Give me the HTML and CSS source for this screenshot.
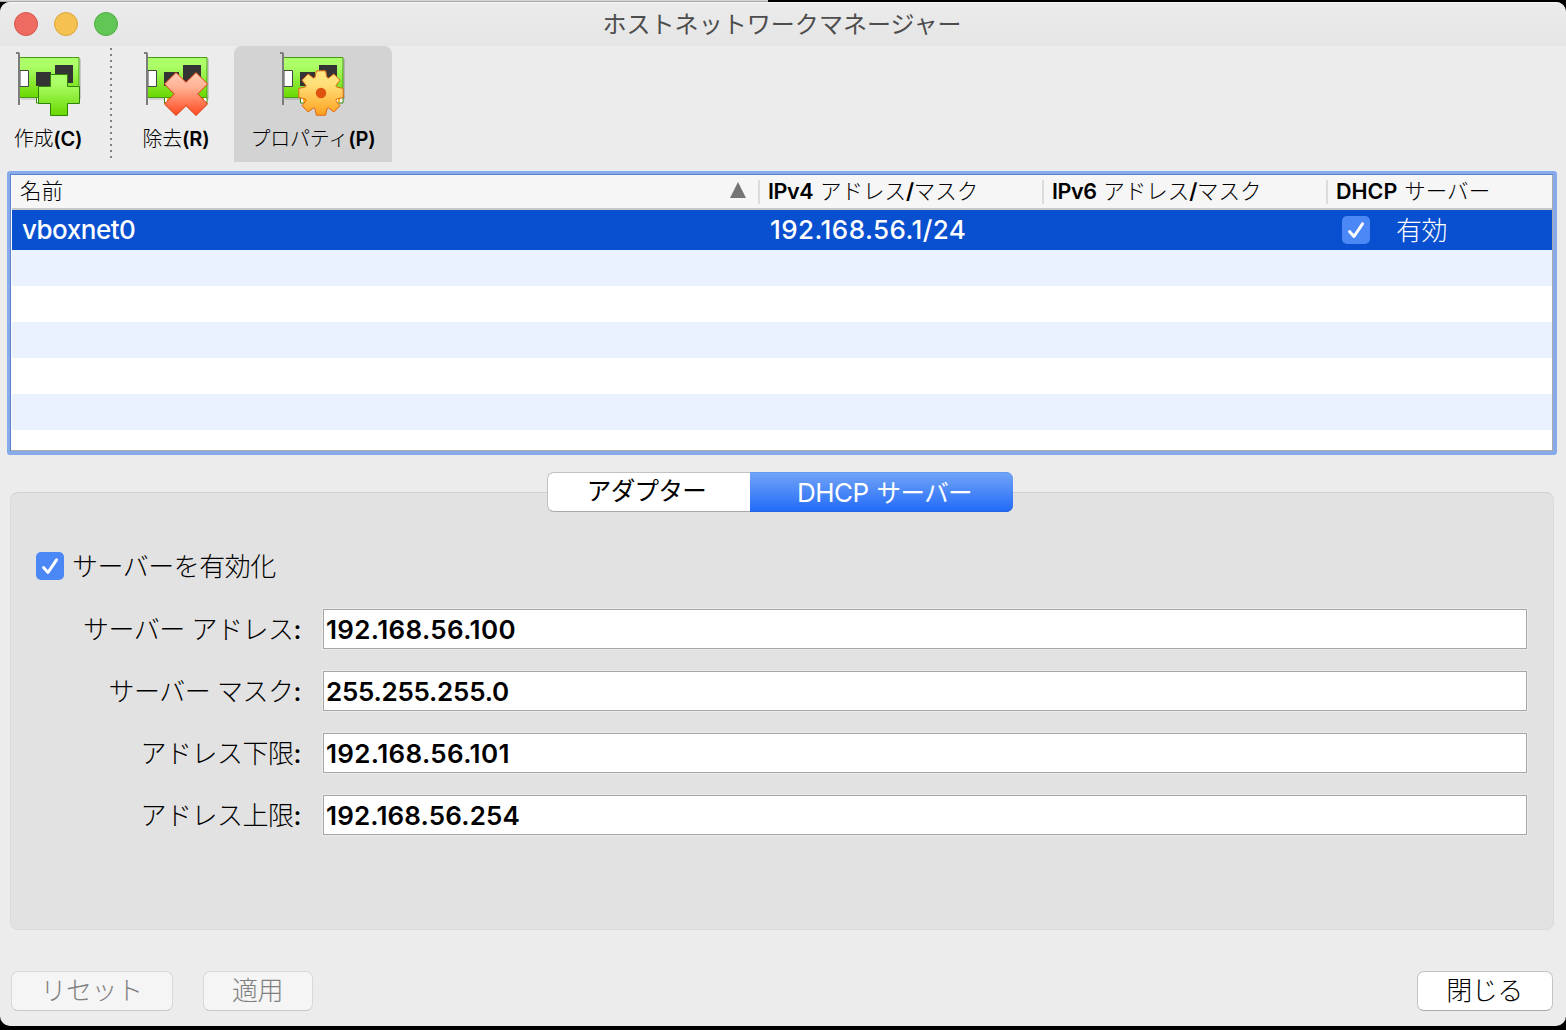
FILE: index.html
```html
<!DOCTYPE html>
<html lang="ja">
<head>
<meta charset="utf-8">
<title>ホストネットワークマネージャー</title>
<link rel="stylesheet" href="styles.css">
</head>
<body>
<svg class="defs" width="0" height="0" aria-hidden="true">
  <defs>
    <linearGradient id="green" x1="0" y1="0" x2="0" y2="1"><stop offset="0.2" stop-color="#adff69"/><stop offset="1" stop-color="#69d700"/></linearGradient>
    <linearGradient id="red" x1="0" y1="0" x2="0" y2="1"><stop offset="0" stop-color="#ffccb3"/><stop offset="0.35" stop-color="#ffb193"/><stop offset="1" stop-color="#ff481e"/></linearGradient>
    <linearGradient id="orange" x1="0" y1="0" x2="0" y2="1"><stop offset="0" stop-color="#ffe680"/><stop offset="0.3" stop-color="#ffe07a"/><stop offset="1" stop-color="#ffa01e"/></linearGradient>
    <symbol id="card" viewBox="0 0 66 66">
      <path d="M6 48H65.200V8" fill="none" stroke="#000" stroke-opacity=".22" stroke-width="1"/>
      <path d="M21.500 46h42.500v6h-42.500z" fill="#fff" stroke="#348a0b"/>
      <path d="M24 47h3v4h-3zM29 47h3v4h-3zM54 47h3v4h-3zM59 47h2v4h-2z" fill="#ffb400"/>
      <path d="M4.500 6.500h59.500v40h-59.500z" fill="url(#green)" stroke="#469b14"/>
      <path d="M5 19.500h8.500v16H5z" fill="#fff" stroke="#444"/>
      <path d="M21 21h15v14H21zM40 14h18v18H40z" fill="#343434"/>
      <path d="M1 2h2.300q.700 0 .700.700V54" fill="none" stroke="#7c7c7c" stroke-width="2"/>
    </symbol>
  </defs>
</svg>
<div class="window">
  <header class="titlebar">
    <div class="lights"><i class="light close"></i><i class="light minimize"></i><i class="light zoom"></i></div>
    <h1 class="title">ホストネットワークマネージャー</h1>
  </header>
  <nav class="toolbar">
    <div class="tool create">
      <svg width="66" height="66" viewBox="0 0 66 66"><use href="#card"/><path d="M35.500 23.500h17v12h12v17h-12v12h-17v-12h-12v-17h12z" fill="url(#green)" stroke="#2f8406"/></svg>
      <span class="caption">作成<b>(C)</b></span>
    </div>
    <div class="separator"></div>
    <div class="tool remove">
      <svg width="66" height="66" viewBox="0 0 66 66"><use href="#card"/><path d="M33 21.500 43 31.300 53 21.500 64.600 33 54.800 43l9.800 10L53 64.500 43 54.700 33 64.500 21.400 53l9.800-10-9.800-10z" fill="url(#red)" stroke="#d83c10"/></svg>
      <span class="caption">除去<b>(R)</b></span>
    </div>
    <div class="tool properties active">
      <svg width="66" height="66" viewBox="0 0 66 66"><use href="#card"/><path transform="translate(42 42)" d="M-6-15.600-4.600-22.200H4.600L6-15.600 7.600-15 12.800-19 19-12.800 15-7.600 15.600-6 22.200-4.600V4.600L15.600 6 15 7.600 19 12.800 12.800 19 7.600 15 6 15.600 4.600 22.200H-4.600L-6 15.600-7.600 15-12.800 19-19 12.800-15 7.600-15.600 6-22.200 4.600V-4.600L-15.600-6-15-7.600-19-12.800-12.800-19-7.600-15z" fill="url(#orange)" stroke="#e06414"/><circle cx="42" cy="42" r="5.200" fill="#df5210"/></svg>
      <span class="caption">プロパティ<b>(P)</b></span>
    </div>
  </nav>
  <section class="table">
    <div class="row head">
      <div class="cell name">名前<svg class="sort" width="16" height="16" viewBox="0 0 16 16"><path d="M8 0l8 16H0z" fill="#757575"/></svg></div>
      <div class="cell"><b>IPv4</b> アドレス<b>/</b>マスク</div>
      <div class="cell"><b>IPv6</b> アドレス<b>/</b>マスク</div>
      <div class="cell dhcp"><b>DHCP</b> サーバー</div>
    </div>
    <div class="row selected">
      <div class="cell name"><b>vboxnet0</b></div>
      <div class="cell"><b class="ip">192.168.56.1/24</b></div>
      <div class="cell"></div>
      <div class="cell enabled"><span class="check"><svg width="28" height="28" viewBox="0 0 28 28"><path d="M7.500 15.500 12 20.500 20.500 7.800"/></svg></span><span class="enabled-text">有効</span></div>
    </div>
    <div class="stripes"></div>
  </section>
  <div class="tabs">
    <div class="tab adapter">アダプター</div>
    <div class="tab current"><b>DHCP</b> サーバー</div>
  </div>
  <section class="panel">
    <label class="enable"><span class="check"><svg width="28" height="28" viewBox="0 0 28 28"><path d="M7.500 15.500 12 20.500 20.500 7.800"/></svg></span><span class="enable-text">サーバーを有効化</span></label>
    <div class="form">
      <label>サーバー アドレス<b>:</b></label><div class="field">192.168.56.100</div>
      <label>サーバー マスク<b>:</b></label><div class="field mask">255.255.255.0</div>
      <label>アドレス下限<b>:</b></label><div class="field">192.168.56.101</div>
      <label>アドレス上限<b>:</b></label><div class="field upper">192.168.56.254</div>
    </div>
  </section>
  <footer class="actions">
    <div class="button reset disabled">リセット</div>
    <div class="button apply disabled">適用</div>
    <div class="button done">閉じる</div>
  </footer>
</div>
</body>
</html>
```
FILE: styles.css
```css
* { box-sizing: border-box; }
body {
  margin: 0;
  height: 1030px;
  padding-top: 2px;
  overflow: hidden;
  background: linear-gradient(#d6d6d6 0 1px, #aaa 1px 2px) 0 0 / 768px 2px no-repeat, #000;
  color: #000;
  font-family: "Noto Sans CJK JP", sans-serif;
  font-weight: 300;
  font-size: 26px;
  letter-spacing: -0.5px;
  white-space: nowrap;
}
b, .field { font-family: Inter, sans-serif; font-weight: 500; }
.ip { letter-spacing: 0.45px; }
.defs { position: absolute; }
.window {
  height: 1024px;
  border-radius: 10px;
  background: #ececec;
  overflow: hidden;
  display: flex;
  flex-direction: column;
}
.titlebar {
  height: 44px;
  flex: none;
  display: grid;
  grid-template-columns: 200px 1fr 200px;
  align-items: center;
  background: linear-gradient(#f6f6f6 0, #ebebeb 2px, #e5e5e5 100%);
}
.lights { display: flex; gap: 16px; padding-left: 14px; }
.light { width: 24px; height: 24px; border-radius: 50%; border: 1px solid; }
.close { background: #ed6b60; border-color: #d6564c; }
.minimize { background: #f5c151; border-color: #d9a53c; }
.zoom { background: #62c656; border-color: #4eac42; }
.title { margin: 0; padding-right: 2px; height: 44px; text-align: center; font-size: 24px; line-height: 42px; font-weight: 400; letter-spacing: 0.05px; color: #4d4d4d; }
.toolbar { height: 116px; flex: none; display: flex; }
.tool { display: flex; flex-direction: column; align-items: center; padding-top: 5px; height: 116px; }
.tool svg { flex: none; }
.create { width: 96px; }
.remove { width: 122px; margin-right: -3px; }
.properties { width: 158px; border-radius: 8px 8px 0 0; }
.properties svg { margin-right: 2px; }
.active { background: #d3d3d3; }
.caption { font-size: 20px; line-height: 42px; letter-spacing: -0.2px; }
.caption b { font-weight: 600; }
.separator {
  width: 2px;
  height: 110px;
  margin: 2px 3px 0 14px;
  background: repeating-linear-gradient(#808080 0 2px, transparent 2px 6px);
}
.table {
  margin: 9px 9px 0 7px;
  height: 284px;
  flex: none;
  border: solid #87aaea;
  border-width: 3px 4px 4px 3px;
  border-radius: 3px;
  background: #fff;
  box-shadow: inset 1px 1px #5981c7, inset -1px -1px #aaa;
  padding: 1px 1px 1px 2px;
}
.row { display: grid; grid-template-columns: 746px 284px 284px 1fr; }
.head { height: 35px; background: #f6f6f6; border-bottom: 2px solid #c8c8c8; font-size: 21.5px; line-height: 29px; letter-spacing: 0; word-spacing: 2px; }
.head b { letter-spacing: -0.4px; font-weight: 600; }
.head .dhcp { letter-spacing: 0.1px; }
.head .dhcp b { letter-spacing: 0; }
.head .cell { padding-left: 10px; }
.head .cell + .cell { background: linear-gradient(#dcdcdc, #dcdcdc) 0 5px / 2px 24px no-repeat; }
.head .name { display: flex; justify-content: space-between; align-items: center; height: 29px; padding: 0 12px 0 8px; }
.selected { height: 40px; background: #0850d0; color: #fff; line-height: 36px; }
.selected .cell { padding-left: 12px; }
.selected .name { padding-left: 10px; }
.selected .enabled { display: flex; align-items: center; gap: 26px; height: 40px; padding-left: 16px; }
.enabled-text { height: 40px; line-height: 37px; }
.check { width: 28px; height: 28px; border-radius: 5px; background: #4b87f5; display: block; flex: none; }
.check svg { display: block; }
.check path { fill: none; stroke: #fff; stroke-width: 3; stroke-linecap: round; stroke-linejoin: round; }
.stripes { height: 200px; background: repeating-linear-gradient(#ebf2ff 0 36px, #fff 36px 72px); }
.tabs {
  width: 466px;
  height: 40px;
  flex: none;
  align-self: center;
  margin: 17px 0 -20px -6px;
  z-index: 1;
  display: grid;
  grid-template-columns: 203px 263px;
  text-align: center;
}
.tab { font-weight: 400; font-size: 24.5px; letter-spacing: -0.6px; }
.adapter {
  background: #fff;
  border: 1px solid #c2c2c2;
  border-right: 0;
  border-bottom-color: #aaa;
  border-radius: 7px 0 0 7px;
  line-height: 34px;
  padding-right: 5px;
}
.current {
  line-height: 39px;
  padding-left: 6px;
  color: #fff;
  background: linear-gradient(#73a5f7, #216af8);
  border-radius: 0 7px 7px 0;
  box-shadow: inset 0 1px #649af2, inset 0 -1px #2364dc;
  word-spacing: 3px;
}
.current b { font-weight: 400; font-size: 26px; letter-spacing: -0.5px; }
.panel {
  margin: 0 12px 0 10px;
  height: 438px;
  flex: none;
  background: #e2e2e2;
  border: 1px solid #dadada;
  border-top-color: #d0d0d0;
  border-radius: 8px;
  padding: 54px 26px 0 25px;
}
.enable { display: flex; align-items: center; gap: 8px; height: 38px; }
.enable-text { height: 38px; line-height: 35px; }
.form { display: grid; grid-template-columns: 265px 1204px; grid-auto-rows: 40px; gap: 22px; margin-top: 24px; }
.form label { text-align: right; line-height: 38px; word-spacing: 1.5px; }
.field { background: #fff; border: 1px solid #a6a6a6; box-shadow: 0 0 0 1px #ebebeb; padding-left: 2px; line-height: 39px; font-weight: 600; letter-spacing: 0.35px; }
.mask { letter-spacing: -0.25px; }
.upper { letter-spacing: 0.15px; }
.actions { display: flex; margin: 41px 13px 0 11px; }
.button { height: 40px; border: 1px solid #c4c4c4; border-bottom-color: #aaa; border-radius: 7px; background: #fff; text-align: center; line-height: 34px; }
.disabled { background: #f5f5f5; border-color: #d8d8d8; border-bottom-color: #c8c8c8; color: #808080; }
.reset { width: 162px; padding-right: 1px; }
.apply { width: 110px; margin-left: 30px; padding-right: 1px; }
.done { width: 136px; margin-left: auto; padding-right: 1px; }
```
